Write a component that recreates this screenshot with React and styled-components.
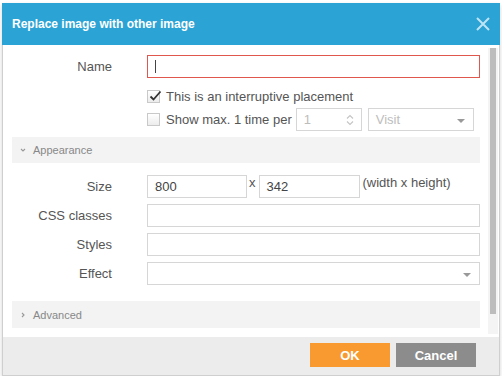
import React from "react";
import styled, { createGlobalStyle } from "styled-components";

const Global = createGlobalStyle`
  html, body { margin: 0; padding: 0; background: #fff; }
  body { font-family: "Liberation Sans", Arial, sans-serif; }
  * { box-sizing: border-box; }
`;

const Dialog = styled.div`
  margin: 3px 0 0 2px;
  width: 498px;
  height: 373px;
  display: flex;
  flex-direction: column;
  border: 1px solid #cfcfcf;
  border-top: none;
  box-shadow: 0 2px 4px rgba(0,0,0,0.18);
  background: #fff;
`;

const Header = styled.div`
  height: 42px;
  background: #2ba3d5;
  display: flex;
  align-items: center;
  justify-content: space-between;
  padding: 0 7px 0 10px;
  margin: 0 -1px;
`;

const Title = styled.div`
  color: #fff;
  font-weight: bold;
  font-size: 12px;
`;

const Close = styled.div`
  width: 20px;
  height: 20px;
  display: flex;
  align-items: center;
  justify-content: center;
`;

const Body = styled.div`
  flex: 1;
  display: flex;
  padding: 0;
`;

const Content = styled.div`
  flex: 1;
  padding: 10px 8px 0 9px;
  display: flex;
  flex-direction: column;
`;

const ScrollTrack = styled.div`
  width: 10px;
  margin: 3px 1px 3px 0;
  background: #f4f4f4;
  display: flex;
  flex-direction: column;
`;

const ScrollThumb = styled.div`
  width: 6px;
  margin-left: 2px;
  height: 266px;
  background: #bdbdbd;
`;

const Row = styled.div`
  display: flex;
  align-items: center;
  height: 23px;
  margin-bottom: ${p => p.$mb ?? 6}px;
`;

const Label = styled.div`
  width: 100px;
  text-align: right;
  font-size: 13px;
  color: #555;
  margin-right: 35px;
  flex-shrink: 0;
`;

const Input = styled.div`
  height: 23px;
  width: ${p => (p.$w ? `${p.$w}px` : "auto")};
  flex: ${p => (p.$w ? "none" : "1")};
  border: 1px solid #d6d6d6;
  background: #fff;
  font-size: 13px;
  color: ${p => (p.$disabled ? "#bdbdbd" : "#444")};
  display: flex;
  align-items: center;
  padding: 0 7px;
  position: relative;
  margin-left: ${p => p.$ml ?? 0}px;
`;

const ErrorInput = styled(Input)`
  border-color: #e0584d;
`;

const Caret = styled.div`
  width: 1px;
  height: 13px;
  background: #444;
`;

const CheckRow = styled.div`
  display: flex;
  align-items: center;
  height: ${p => p.$h}px;
  margin-bottom: ${p => p.$mb}px;
  padding-left: 135px;
  font-size: 13px;
  color: #555;
  gap: 6px;
`;

const Box = styled.div`
  width: 13px;
  height: 13px;
  border: 1px solid #c9c9c9;
  background: linear-gradient(#fff, #ececec);
  position: relative;
  flex-shrink: 0;
`;

const Tick = styled.svg`
  position: absolute;
  left: 0px;
  top: -2px;
`;

const Section = styled.div`
  height: ${p => p.$h}px;
  background: #f3f3f3;
  display: flex;
  align-items: center;
  padding-left: 8px;
  gap: 7px;
  font-size: 11px;
  color: #888;
  margin-bottom: ${p => p.$mb}px;
`;

const Small = styled.span`
  font-size: 13px;
  color: #555;
  margin: ${p => p.$m};
  align-self: flex-start;
`;

const Arrow = styled.div`
  position: absolute;
  right: ${p => p.$r}px;
  top: 10px;
  width: 0;
  height: 0;
  border-left: 4px solid transparent;
  border-right: 4px solid transparent;
  border-top: 4px solid #999;
`;

const Spin = styled.svg`
  position: absolute;
  right: 7px;
  top: 5px;
`;

const Footer = styled.div`
  height: 38px;
  background: #ececec;
  display: flex;
  align-items: center;
  justify-content: flex-end;
  gap: 6px;
  padding: 0 23px 2px 0;
`;

const Button = styled.div`
  width: 80px;
  height: 24px;
  background: ${p => (p.$primary ? "#f89a30" : "#8c8c8c")};
  color: #fff;
  font-weight: bold;
  font-size: 13px;
  display: flex;
  align-items: center;
  justify-content: center;
`;

const Chevron = ({ down }) => (
  <svg width="6" height="6" viewBox="0 0 6 6">
    {down ? (
      <path d="M1 2 L3 4 L5 2" fill="none" stroke="#999" strokeWidth="1.1" />
    ) : (
      <path d="M2 1 L4 3 L2 5" fill="none" stroke="#999" strokeWidth="1.1" />
    )}
  </svg>
);

export default function App() {
  return (
    <>
      <Global />
      <Dialog>
        <Header>
          <Title>Replace image with other image</Title>
          <Close>
            <svg width="16" height="16" viewBox="0 0 16 16">
              <path d="M2 2 L14 14 M14 2 L2 14" stroke="#bfe4f4" strokeWidth="2" />
            </svg>
          </Close>
        </Header>
        <Body>
          <Content>
            <Row $mb={10}>
              <Label>Name</Label>
              <ErrorInput>
                <Caret />
              </ErrorInput>
            </Row>
            <CheckRow $h={16} $mb={4}>
              <Box>
                <Tick width="15" height="14" viewBox="0 0 15 14">
                  <path d="M2.5 7.5 L5.5 10.5 L12.5 2.5" fill="none" stroke="#333" strokeWidth="1.8" />
                </Tick>
              </Box>
              This is an interruptive placement
            </CheckRow>
            <CheckRow $h={23} $mb={6}>
              <Box />
              Show max. 1 time per
              <Input $w={66} $disabled $ml={-2}>
                1
                <Spin width="8" height="12" viewBox="0 0 8 12">
                  <path d="M1 4.5 L4 1.5 L7 4.5 M1 7.5 L4 10.5 L7 7.5" fill="none" stroke="#c4c4c4" strokeWidth="1.1" />
                </Spin>
              </Input>
              <Input $w={106} $disabled>
                Visit
                <Arrow $r={8} />
              </Input>
            </CheckRow>
            <Section $h={26} $mb={12}>
              <Chevron down />
              Appearance
            </Section>
            <Row>
              <Label>Size</Label>
              <Input $w={100}>800</Input>
              <Small $m="0 3px 0 2px">x</Small>
              <Input $w={101}>342</Input>
              <Small $m="0 0 0 3px">(width x height)</Small>
            </Row>
            <Row>
              <Label>CSS classes</Label>
              <Input />
            </Row>
            <Row>
              <Label>Styles</Label>
              <Input />
            </Row>
            <Row $mb={16}>
              <Label>Effect</Label>
              <Input>
                <Arrow $r={8} />
              </Input>
            </Row>
            <Section $h={27} $mb={0}>
              <Chevron />
              Advanced
            </Section>
          </Content>
          <ScrollTrack>
            <ScrollThumb />
          </ScrollTrack>
        </Body>
        <Footer>
          <Button $primary>OK</Button>
          <Button>Cancel</Button>
        </Footer>
      </Dialog>
    </>
  );
}
